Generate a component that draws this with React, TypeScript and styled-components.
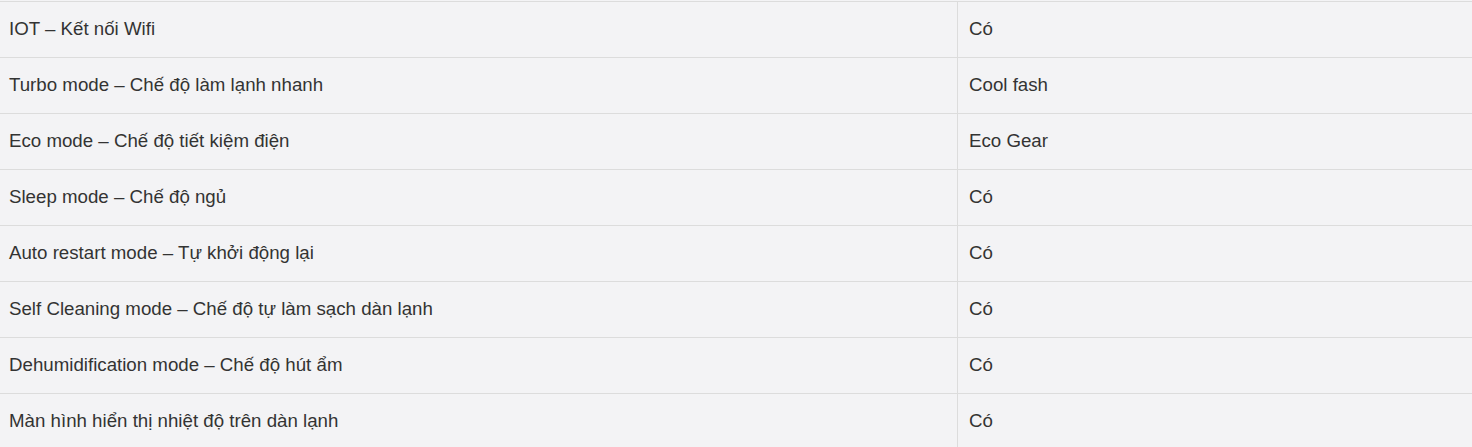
import React from "react";
import styled, { createGlobalStyle } from "styled-components";

const Global = createGlobalStyle`
  html, body { margin: 0; padding: 0; background: #f3f3f5; }
  body { padding-top: 1px; font-family: "Liberation Sans", Arial, sans-serif; }
`;

const Table = styled.table`
  width: 1472px;
  border-collapse: collapse;
  background: #f3f3f5;
  color: #333;
  font-size: 18.7px;
`;

const Row = styled.tr`
  border-top: 1px solid #dcdcdc;
`;

const Cell = styled.td<{ $first?: boolean }>`
  height: 53px;
  padding: 0 0 2px ${(p) => (p.$first ? "9px" : "11px")};
  vertical-align: middle;
  width: ${(p) => (p.$first ? "948px" : "auto")};
  border-right: ${(p) => (p.$first ? "1px solid #dcdcdc" : "none")};
  line-height: 22px;
  box-sizing: content-box;
`;

const rows: [string, string][] = [
  ["IOT – Kết nối Wifi", "Có"],
  ["Turbo mode – Chế độ làm lạnh nhanh", "Cool fash"],
  ["Eco mode – Chế độ tiết kiệm điện", "Eco Gear"],
  ["Sleep mode – Chế độ ngủ", "Có"],
  ["Auto restart mode – Tự khởi động lại", "Có"],
  ["Self Cleaning mode – Chế độ tự làm sạch dàn lạnh", "Có"],
  ["Dehumidification mode – Chế độ hút ẩm", "Có"],
  ["Màn hình hiển thị nhiệt độ trên dàn lạnh", "Có"],
];

export default function App() {
  return (
    <>
      <Global />
      <Table>
        <tbody>
          {rows.map(([a, b]) => (
            <Row key={a}>
              <Cell $first>{a}</Cell>
              <Cell>{b}</Cell>
            </Row>
          ))}
        </tbody>
      </Table>
    </>
  );
}
